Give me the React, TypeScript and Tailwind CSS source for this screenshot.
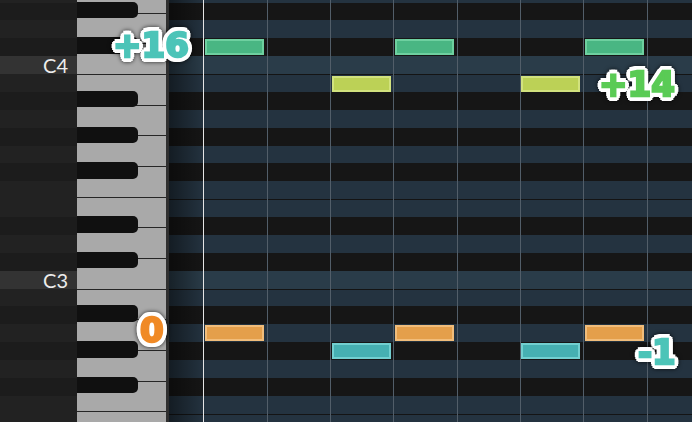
import React from "react";

// piano roll geometry
const ROW = 17.875;
const OFFSET = -15.375;
const BEAT = 63.3;
const BAR_X = 34.8;

const names = [
  "E4", "D#4", "D4", "C#4", "C4", "B3", "A#3", "A3", "G#3", "G3", "F#3", "F3", "E3",
  "D#3", "D3", "C#3", "C3", "B2", "A#2", "A2", "G#2", "G2", "F#2", "F2", "E2", "D#2",
];

const rows = names.map((name) => ({
  name,
  sharp: name.includes("#"),
  isC: name[0] === "C" && !name.includes("#"),
  split: (name[0] === "B" || name[0] === "E") && !name.includes("#"),
}));

type Note = { pitch: string; beat: number; fill: string };

const notes: Note[] = [
  { pitch: "C#4", beat: 0, fill: "bg-[#49b683] border-[#6ed0a0]" },
  { pitch: "C#4", beat: 3, fill: "bg-[#49b683] border-[#6ed0a0]" },
  { pitch: "C#4", beat: 6, fill: "bg-[#49b683] border-[#6ed0a0]" },
  { pitch: "B3", beat: 2, fill: "bg-[#bcd156] border-[#d2e27e]" },
  { pitch: "B3", beat: 5, fill: "bg-[#bcd156] border-[#d2e27e]" },
  { pitch: "A2", beat: 0, fill: "bg-[#e49f4b] border-[#f1bd7b]" },
  { pitch: "A2", beat: 3, fill: "bg-[#e49f4b] border-[#f1bd7b]" },
  { pitch: "A2", beat: 6, fill: "bg-[#e49f4b] border-[#f1bd7b]" },
  { pitch: "G#2", beat: 2, fill: "bg-[#46b0b2] border-[#72cfd0]" },
  { pitch: "G#2", beat: 5, fill: "bg-[#46b0b2] border-[#72cfd0]" },
];

const whiteKeys = Array.from({ length: 15 });

function LabelColumn() {
  return (
    <div className="w-[77px] shrink-0 flex flex-col mt-[-15.375px]">
      {rows.map((r) => (
        <div
          key={r.name}
          className={`h-[17.875px] shrink-0 flex items-center justify-end pr-[9px] ${
            r.isC ? "bg-[#333333]" : r.sharp ? "bg-[#1c1c1c]" : "bg-[#222222]"
          }`}
        >
          {r.isC && (
            <span className="font-['Lato',sans-serif] text-[20px] leading-none text-[#ececec]">{r.name}</span>
          )}
        </div>
      ))}
    </div>
  );
}

function Keyboard() {
  return (
    <div className="relative w-[89px] shrink-0 bg-[#a9a9a9] overflow-hidden">
      <div className="flex flex-col mt-[-17.8px]">
        {whiteKeys.map((_, i) => (
          <div key={i} className="h-[30.643px] shrink-0 border-t-[1.5px] border-[#262626]" />
        ))}
      </div>
      {rows.map((r, i) =>
        r.sharp ? (
          <div
            key={r.name}
            className="absolute left-0 w-[61px] h-[16.5px] rounded-r-[5px] bg-[#101010]"
            style={{ top: OFFSET + i * ROW - 1 }}
          />
        ) : null
      )}
    </div>
  );
}

function Grid() {
  return (
    <div className="relative flex-1 overflow-hidden">
      <div className="flex flex-col mt-[-15.375px]">
        {rows.map((r) => (
          <div
            key={r.name}
            className={`relative h-[17.875px] shrink-0 ${
              r.sharp ? "bg-[#161616]" : r.isC ? "bg-[#2a3c49]" : "bg-[#243340]"
            } ${r.split ? "border-t border-[#141414]" : ""}`}
          >
            {notes
              .filter((n) => n.pitch === r.name)
              .map((n) => (
                <div
                  key={n.beat}
                  className={`absolute top-[0.5px] h-[16px] w-[59px] border-2 ${n.fill}`}
                  style={{ left: BAR_X + n.beat * BEAT + 1.5 }}
                />
              ))}
          </div>
        ))}
      </div>
      <div className="absolute left-0 top-0 bottom-0 w-[36px] bg-linear-to-r from-black/45 to-transparent" />
      <div className="absolute inset-0 flex pl-[34.8px] pointer-events-none">
        {Array.from({ length: 8 }).map((_, i) => (
          <div
            key={i}
            className={`w-[63.3px] shrink-0 border-l-[1.5px] ${i === 0 ? "border-[#e4e4e4]" : "border-[#525e69]"}`}
          />
        ))}
      </div>
    </div>
  );
}

// heavy glyphs: a same-colour stroke fattens them, a ring of white shadows
// gives the outline, and a soft dark halo sits around it
const badge =
  "absolute font-['DejaVu_Sans',sans-serif] font-bold text-[34px] leading-none [-webkit-text-stroke:2.4px_currentColor] " +
  "[text-shadow:5px_0_0_#fff,4.6px_1.9px_0_#fff,3.5px_3.5px_0_#fff,1.9px_4.6px_0_#fff,0_5px_0_#fff,-1.9px_4.6px_0_#fff,-3.5px_3.5px_0_#fff,-4.6px_1.9px_0_#fff,-5px_0_0_#fff,-4.6px_-1.9px_0_#fff,-3.5px_-3.5px_0_#fff,-1.9px_-4.6px_0_#fff,0_-5px_0_#fff,1.9px_-4.6px_0_#fff,3.5px_-3.5px_0_#fff,4.6px_-1.9px_0_#fff,3px_0_0_#fff,0_3px_0_#fff,-3px_0_0_#fff,0_-3px_0_#fff,2px_2px_0_#fff,-2px_2px_0_#fff,2px_-2px_0_#fff,-2px_-2px_0_#fff] " +
  "drop-shadow-[0_0_2px_rgba(0,0,0,0.75)]";

export default function App() {
  return (
    <div className="relative w-[692px] h-[422px] overflow-hidden flex bg-[#161616]">
      <LabelColumn />
      <Keyboard />
      <div className="w-[2.7px] shrink-0 bg-[#2f2f2f]" />
      <Grid />

      <span className={`${badge} left-[113px] top-[28px] text-[#4cc4b8]`}>+16</span>
      <span className={`${badge} left-[599px] top-[67px] text-[#5acb55]`}>+14</span>
      <span className={`${badge} left-[140px] top-[313px] text-[#f08a26]`}>0</span>
      <span className={`${badge} left-[638px] top-[335px] text-[#4cc4b8]`}>-1</span>
    </div>
  );
}
